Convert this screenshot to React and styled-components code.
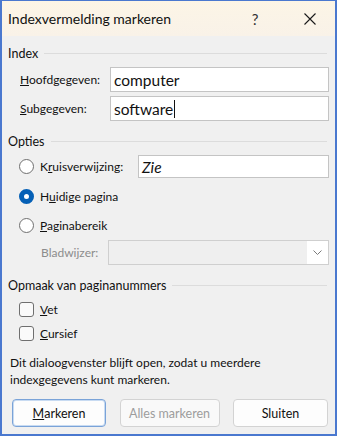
import styled, { createGlobalStyle } from 'styled-components';

const GlobalStyle = createGlobalStyle`
  html, body {
    margin: 0;
    padding: 0;
    background: #ffffff;
  }
  body {
    font-family: Lato, "Noto Sans", sans-serif;
  }
`;

export default function App() {
  return (
    <>
      <GlobalStyle />
      <Window>
        <TitleBar>
          <Title>Indexvermelding markeren</Title>
          <TitleButton $gap={9}>?</TitleButton>
          <TitleButton>
            <svg width="12" height="12" viewBox="0 0 12 12">
              <path d="M0.5 0.5 L11.5 11.5 M11.5 0.5 L0.5 11.5" stroke="#1a1a1a" strokeWidth="1.1" fill="none" />
            </svg>
          </TitleButton>
        </TitleBar>

        <Body>
          <GroupHeader>Index</GroupHeader>
          <FieldRow $top={5}>
            <Label $width={90}><u>H</u>oofdgegeven:</Label>
            <TextBox>computer</TextBox>
          </FieldRow>
          <FieldRow $top={4}>
            <Label $width={90}><u>S</u>ubgegeven:</Label>
            <TextBox>
              software<Caret />
            </TextBox>
          </FieldRow>

          <GroupHeader $top={11}>Opties</GroupHeader>
          <OptionRow $top={5} $height={23}>
            <Radio />
            <OptionLabel $width={98}>K<u>r</u>uisverwijzing:</OptionLabel>
            <TextBox $height={23} $italic>Zie</TextBox>
          </OptionRow>
          <OptionRow $top={9}>
            <Radio $checked />
            <OptionLabel>H<u>u</u>idige pagina</OptionLabel>
          </OptionRow>
          <OptionRow $top={11}>
            <Radio />
            <OptionLabel><u>P</u>aginabereik</OptionLabel>
          </OptionRow>
          <ComboRow>
            <Label $width={67} $disabled>Bladwijzer:</Label>
            <Combo>
              <ComboArrow>
                <svg width="9" height="5" viewBox="0 0 9 5">
                  <path d="M0.5 0.5 L4.5 4.5 L8.5 0.5" stroke="#7a7a7a" strokeWidth="1" fill="none" />
                </svg>
              </ComboArrow>
            </Combo>
          </ComboRow>

          <GroupHeader $top={11}>Opmaak van paginanummers</GroupHeader>
          <OptionRow $top={6}>
            <Check />
            <OptionLabel><u>V</u>et</OptionLabel>
          </OptionRow>
          <OptionRow $top={6}>
            <Check />
            <OptionLabel><u>C</u>ursief</OptionLabel>
          </OptionRow>

          <Note>
            Dit dialoogvenster blijft open, zodat u meerdere
            <br />
            indexgegevens kunt markeren.
          </Note>

          <ButtonBar>
            <Button $width={94} $default><u>M</u>arkeren</Button>
            <Button $width={100} $disabled>Alles markeren</Button>
            <Button $width={95}>Sluiten</Button>
          </ButtonBar>
        </Body>
      </Window>
    </>
  );
}

// Styled Components

const Window = styled.div`
  width: 337px;
  height: 436px;
  box-sizing: border-box;
  border: 2px solid #4a78cf;
  border-top-width: 1px;
  background: #f0f0f0;
  display: flex;
  flex-direction: column;
  font-size: 12px;
  color: #111;
`;

const TitleBar = styled.div`
  height: 35px;
  flex-shrink: 0;
  display: flex;
  align-items: center;
  padding: 0 2px 0 6px;
  background: linear-gradient(#fcf5e6, #f9f2e8);
`;

const Title = styled.div`
  flex: 1;
  font-size: 14px;
  color: #111;
  padding-bottom: 1px;
`;

const TitleButton = styled.div`
  width: 46px;
  height: 30px;
  margin-right: ${(p) => p.$gap || 0}px;
  display: flex;
  align-items: center;
  justify-content: center;
  font-size: 15px;
  color: #333;
`;

const Body = styled.div`
  flex: 1;
  display: flex;
  flex-direction: column;
  padding: 8px 6px 0 6px;
`;

const GroupHeader = styled.div`
  display: flex;
  align-items: center;
  gap: 6px;
  height: 18px;
  margin-top: ${(p) => p.$top || 0}px;
  font-size: 12.5px;
  &::after {
    content: '';
    flex: 1;
    height: 1px;
    background: #dcdcdc;
    margin-right: 2px;
  }
`;

const FieldRow = styled.div`
  display: flex;
  align-items: center;
  padding-left: 12px;
  margin-top: ${(p) => p.$top}px;
`;

const Label = styled.div`
  width: ${(p) => p.$width}px;
  flex-shrink: 0;
  color: ${(p) => (p.$disabled ? '#8c8c8c' : '#111')};
  white-space: nowrap;
`;

const TextBox = styled.div`
  flex: 1;
  height: ${(p) => p.$height || 25}px;
  box-sizing: border-box;
  border: 1px solid #c4c4c4;
  background: #ffffff;
  display: flex;
  align-items: center;
  padding-left: 3px;
  font-size: 15.5px;
  font-style: ${(p) => (p.$italic ? 'italic' : 'normal')};
  color: #111;
`;

const Caret = styled.span`
  display: inline-block;
  width: 1px;
  height: 18px;
  background: #111;
  margin-left: 1px;
`;

const OptionRow = styled.div`
  display: flex;
  align-items: center;
  height: ${(p) => p.$height || 18}px;
  padding-left: 11px;
  margin-top: ${(p) => p.$top || 0}px;
`;

const Radio = styled.span`
  width: 15px;
  height: 15px;
  box-sizing: border-box;
  border-radius: 50%;
  flex-shrink: 0;
  border: ${(p) => (p.$checked ? '5px solid #0560b6' : '1px solid #6f6f6f')};
  background: #ffffff;
`;

const Check = styled.span`
  width: 15px;
  height: 15px;
  box-sizing: border-box;
  border-radius: 3px;
  border: 1px solid #6f6f6f;
  background: #fafafa;
  flex-shrink: 0;
`;

const OptionLabel = styled.span`
  margin-left: 6px;
  width: ${(p) => (p.$width ? `${p.$width}px` : 'auto')};
  flex-shrink: 0;
  white-space: nowrap;
`;

const ComboRow = styled.div`
  display: flex;
  align-items: center;
  padding-left: 33px;
  margin-top: 6px;
`;

const Combo = styled.div`
  flex: 1;
  height: 25px;
  box-sizing: border-box;
  border: 1px solid #cfcfcf;
  background: #efefef;
  display: flex;
  justify-content: flex-end;
`;

const ComboArrow = styled.div`
  width: 21px;
  background: #ffffff;
  display: flex;
  align-items: center;
  justify-content: center;
`;

const Note = styled.div`
  margin-top: 12px;
  line-height: 17px;
  padding-left: 2px;
`;

const ButtonBar = styled.div`
  display: flex;
  justify-content: space-between;
  padding: 0 1px 0 4px;
  margin-top: 11px;
`;

const Button = styled.div`
  width: ${(p) => p.$width}px;
  height: 28px;
  box-sizing: border-box;
  border-radius: 4px;
  display: flex;
  align-items: center;
  justify-content: center;
  background: ${(p) => (p.$disabled ? '#f9f9f9' : '#fdfdfd')};
  border: 1px solid ${(p) => (p.$default ? '#7aa3d8' : '#d3d3d3')};
  box-shadow: ${(p) => (p.$default ? 'inset 0 0 0 1px #c8dbf2' : 'none')};
  color: ${(p) => (p.$disabled ? '#9d9d9d' : '#111')};
  font-size: 12.5px;
`;
